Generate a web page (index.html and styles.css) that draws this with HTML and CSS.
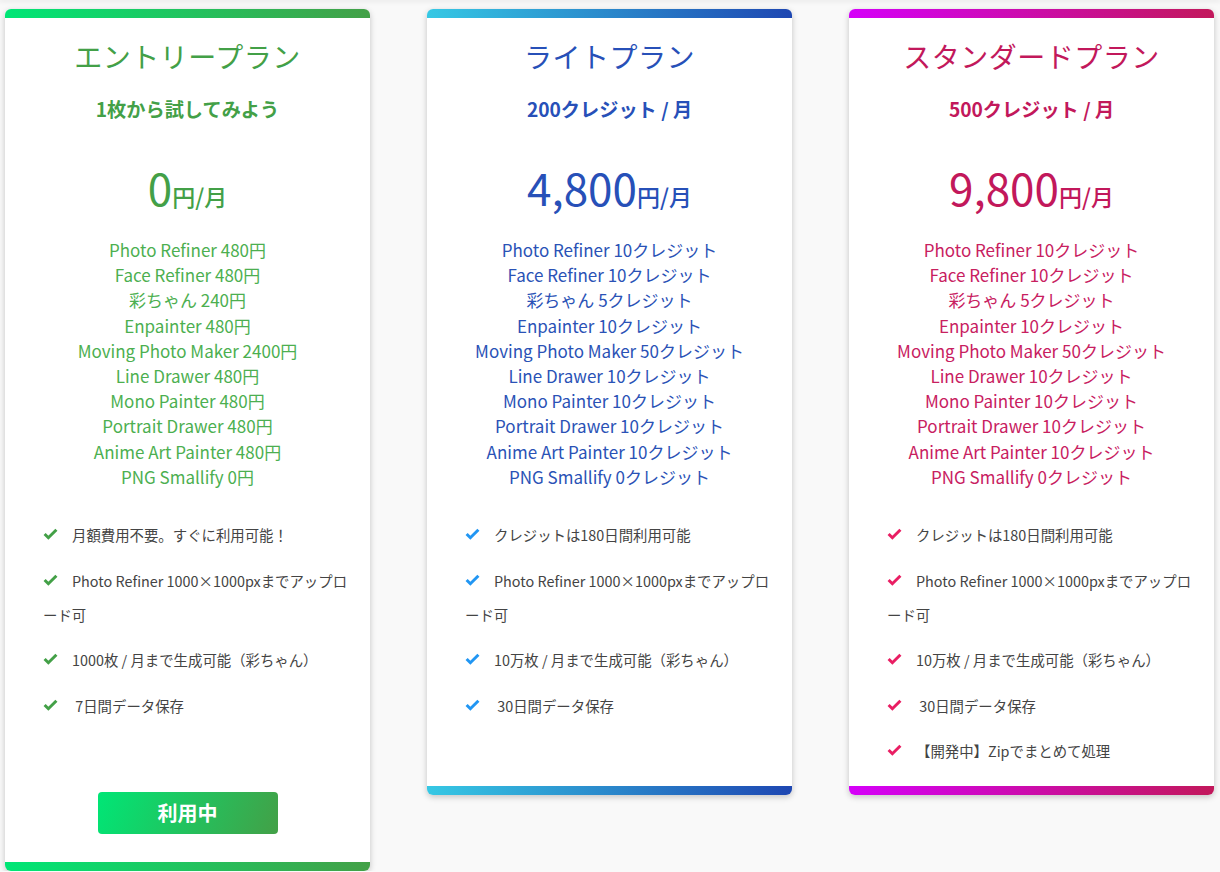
FILE: index.html
```html
<!DOCTYPE html>
<html lang="ja">
<head>
<meta charset="utf-8">
<title>料金プラン</title>
<link rel="stylesheet" href="styles.css">
</head>
<body>
<div class="page-top"></div>
<main class="plans">
  <section class="card card-entry">
    <div class="bar"></div>
    <div class="card-body">
      <h2 class="plan-name">エントリープラン</h2>
      <p class="plan-sub">1枚から試してみよう</p>
      <p class="price"><span class="num">0</span><span class="unit">円/月</span></p>
      <ul class="tools">
        <li>Photo Refiner 480円</li>
        <li>Face Refiner 480円</li>
        <li>彩ちゃん 240円</li>
        <li>Enpainter 480円</li>
        <li>Moving Photo Maker 2400円</li>
        <li>Line Drawer 480円</li>
        <li>Mono Painter 480円</li>
        <li>Portrait Drawer 480円</li>
        <li>Anime Art Painter 480円</li>
        <li>PNG Smallify 0円</li>
      </ul>
      <ul class="checks">
        <li><svg class="ck" viewBox="0 0 14 11"><path d="M1.5 5.5 L5 9 L12.5 1.5"/></svg>月額費用不要。すぐに利用可能！</li>
        <li><svg class="ck" viewBox="0 0 14 11"><path d="M1.5 5.5 L5 9 L12.5 1.5"/></svg>Photo Refiner 1000×1000pxまでアップロード可</li>
        <li><svg class="ck" viewBox="0 0 14 11"><path d="M1.5 5.5 L5 9 L12.5 1.5"/></svg>1000枚 / 月まで生成可能（彩ちゃん）</li>
        <li><svg class="ck" viewBox="0 0 14 11"><path d="M1.5 5.5 L5 9 L12.5 1.5"/></svg> 7日間データ保存</li>
      </ul>
      <div class="btn-wrap"><button class="btn">利用中</button></div>
    </div>
    <div class="bar"></div>
  </section>

  <section class="card card-lite">
    <div class="bar"></div>
    <div class="card-body">
      <h2 class="plan-name">ライトプラン</h2>
      <p class="plan-sub">200クレジット / 月</p>
      <p class="price"><span class="num">4,800</span><span class="unit">円/月</span></p>
      <ul class="tools">
        <li>Photo Refiner 10クレジット</li>
        <li>Face Refiner 10クレジット</li>
        <li>彩ちゃん 5クレジット</li>
        <li>Enpainter 10クレジット</li>
        <li>Moving Photo Maker 50クレジット</li>
        <li>Line Drawer 10クレジット</li>
        <li>Mono Painter 10クレジット</li>
        <li>Portrait Drawer 10クレジット</li>
        <li>Anime Art Painter 10クレジット</li>
        <li>PNG Smallify 0クレジット</li>
      </ul>
      <ul class="checks checks-fixed">
        <li><svg class="ck" viewBox="0 0 14 11"><path d="M1.5 5.5 L5 9 L12.5 1.5"/></svg>クレジットは180日間利用可能</li>
        <li><svg class="ck" viewBox="0 0 14 11"><path d="M1.5 5.5 L5 9 L12.5 1.5"/></svg>Photo Refiner 1000×1000pxまでアップロード可</li>
        <li><svg class="ck" viewBox="0 0 14 11"><path d="M1.5 5.5 L5 9 L12.5 1.5"/></svg>10万枚 / 月まで生成可能（彩ちゃん）</li>
        <li><svg class="ck" viewBox="0 0 14 11"><path d="M1.5 5.5 L5 9 L12.5 1.5"/></svg> 30日間データ保存</li>
      </ul>
    </div>
    <div class="bar"></div>
  </section>

  <section class="card card-std">
    <div class="bar"></div>
    <div class="card-body">
      <h2 class="plan-name">スタンダードプラン</h2>
      <p class="plan-sub">500クレジット / 月</p>
      <p class="price"><span class="num">9,800</span><span class="unit">円/月</span></p>
      <ul class="tools">
        <li>Photo Refiner 10クレジット</li>
        <li>Face Refiner 10クレジット</li>
        <li>彩ちゃん 5クレジット</li>
        <li>Enpainter 10クレジット</li>
        <li>Moving Photo Maker 50クレジット</li>
        <li>Line Drawer 10クレジット</li>
        <li>Mono Painter 10クレジット</li>
        <li>Portrait Drawer 10クレジット</li>
        <li>Anime Art Painter 10クレジット</li>
        <li>PNG Smallify 0クレジット</li>
      </ul>
      <ul class="checks checks-fixed">
        <li><svg class="ck" viewBox="0 0 14 11"><path d="M1.5 5.5 L5 9 L12.5 1.5"/></svg>クレジットは180日間利用可能</li>
        <li><svg class="ck" viewBox="0 0 14 11"><path d="M1.5 5.5 L5 9 L12.5 1.5"/></svg>Photo Refiner 1000×1000pxまでアップロード可</li>
        <li><svg class="ck" viewBox="0 0 14 11"><path d="M1.5 5.5 L5 9 L12.5 1.5"/></svg>10万枚 / 月まで生成可能（彩ちゃん）</li>
        <li><svg class="ck" viewBox="0 0 14 11"><path d="M1.5 5.5 L5 9 L12.5 1.5"/></svg> 30日間データ保存</li>
        <li><svg class="ck" viewBox="0 0 14 11"><path d="M1.5 5.5 L5 9 L12.5 1.5"/></svg>【開発中】Zipでまとめて処理</li>
      </ul>
    </div>
    <div class="bar"></div>
  </section>
</main>
</body>
</html>
```

FILE: styles.css
```css
* { box-sizing: border-box; }

html, body {
  margin: 0;
  padding: 0;
}

body {
  background: #f9f9f9;
  font-family: "Noto Sans CJK JP", "Noto Sans", sans-serif;
  color: #444;
}

.page-top {
  height: 0;
  box-shadow: 0 0 5px 1px rgba(0, 0, 0, 0.12);
}

.plans {
  display: flex;
  align-items: flex-start;
  gap: 57px;
  padding: 9px 6px 0 5px;
}

.card {
  width: 365px;
  flex: 0 0 365px;
  background: #fff;
  border-radius: 6px;
  overflow: hidden;
  box-shadow: 0 2px 6px rgba(0, 0, 0, 0.22);
}

.bar { height: 9px; }

.card-entry .bar { background: linear-gradient(90deg, #00e676, #43a047); }
.card-lite .bar { background: linear-gradient(90deg, #36c8e4, #1e47b2); }
.card-std .bar { background: linear-gradient(90deg, #d500f9, #c2185b); }

.card-entry { --main: #43a047; --soft: #4caf50; --ck: #43a047; }
.card-lite { --main: #2750b8; --soft: #2a52b6; --ck: #2196f3; }
.card-std { --main: #c2185b; --soft: #c8205f; --ck: #e91e63; }

.card-body {
  padding: 17px 16px 18px 38px;
}

.plan-name {
  margin: 0 0 0 -22px;
  text-align: center;
  font-size: 28px;
  font-weight: 400;
  line-height: 42px;
  color: var(--main);
  letter-spacing: 0.5px;
}

.plan-sub {
  margin: 19px 0 0 -22px;
  text-align: center;
  font-size: 19.2px;
  font-weight: 700;
  line-height: 27px;
  color: var(--main);
}

.price {
  margin: 36px 0 0 -22px;
  text-align: center;
  line-height: 57px;
  color: var(--main);
}

.price .num {
  font-size: 44px;
  font-weight: 400;
}

.price .unit {
  font-size: 23px;
  font-weight: 500;
}

.tools {
  list-style: none;
  margin: 9px 0 0 -22px;
  padding: 0;
  text-align: center;
  font-size: 17px;
  line-height: 25.2px;
  color: var(--soft);
}

.checks {
  list-style: none;
  margin: 29px 0 0 0;
  padding: 0;
  font-size: 14.4px;
  line-height: 34px;
  color: #444;
}

.checks li + li { margin-top: 11.5px; }

.checks-fixed { min-height: 250px; }

.ck {
  width: 15px;
  height: 12px;
  margin-right: 14px;
  vertical-align: 1px;
  fill: none;
  stroke: var(--ck);
  stroke-width: 2.8;
  stroke-linecap: butt;
  stroke-linejoin: miter;
}

.btn-wrap {
  margin: 69px 0 10px -22px;
  text-align: center;
}

.btn {
  width: 180px;
  height: 42px;
  border: none;
  border-radius: 4px;
  background: linear-gradient(110deg, #00e676, #43a047);
  color: #fff;
  font-family: "Noto Sans CJK JP", "Noto Sans", sans-serif;
  font-size: 20px;
  font-weight: 700;
  cursor: pointer;
}
```
